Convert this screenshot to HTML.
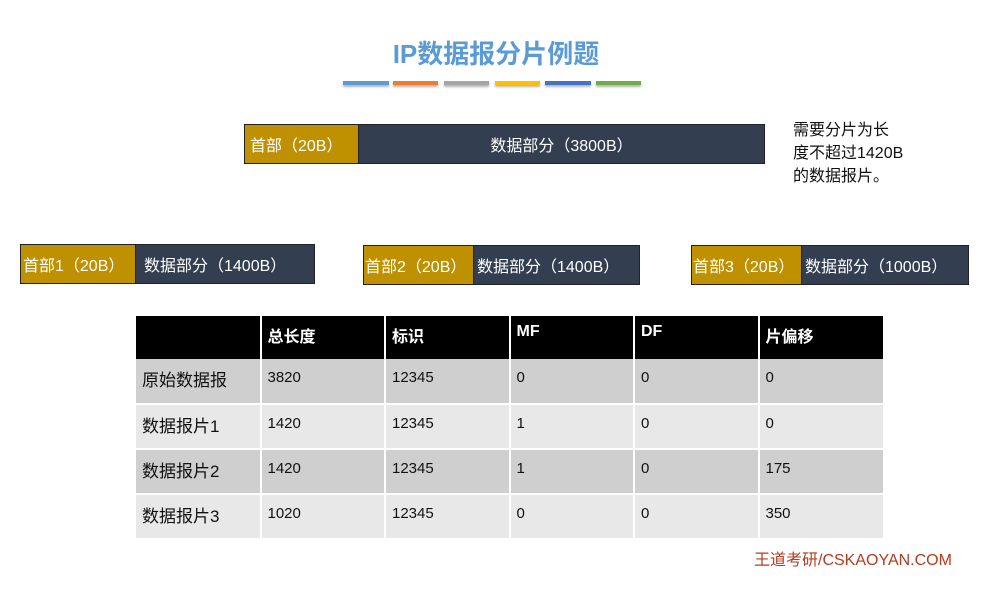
<!DOCTYPE html>
<html><head><meta charset="utf-8"><style>
*{margin:0;padding:0;box-sizing:border-box}
body{width:1002px;height:601px;background:#fff;position:relative;overflow:hidden;font-family:"Liberation Sans","Noto Sans CJK SC",sans-serif;}
.a{position:absolute}
.title{left:0;width:992px;top:34px;text-align:center;font-size:26px;font-weight:bold;color:#5b9bd5}
.bar{top:81px;height:4px;box-shadow:0 2px 2px rgba(0,0,0,.3)}
.box{position:absolute;display:flex;border:1px solid #222;color:#fff;font-size:16px;white-space:nowrap}
.box .h{background:#bf9000;display:flex;align-items:center;border-right:1px solid #222}
.box .d{background:#333f50;display:flex;align-items:center;flex:1}
table{position:absolute;left:136px;top:316px;border-collapse:collapse;width:747px;font-size:15px;color:#111}
td{height:45px;width:124.5px;border-left:2px solid #fff;border-bottom:2px solid #fff;vertical-align:top;padding:10px 0 0 6px}
td:first-child{font-size:17px;padding-top:7px}
tr.hd td{background:#000;color:#fff;font-weight:bold;height:43px;border-bottom:none;padding-top:7px;font-size:16px}
tr.hd td:first-child,td:first-child{border-left:none}
tr.o td{background:#cfcfcf}
tr.e td{background:#e8e8e8}
</style></head><body>
<div class="a title">IP数据报分片例题</div>
<div class="a bar" style="left:343px;width:46px;background:#5b9bd5"></div>
<div class="a bar" style="left:393px;width:45px;background:#ed7d31"></div>
<div class="a bar" style="left:444px;width:45px;background:#a5a5a5"></div>
<div class="a bar" style="left:495px;width:45px;background:#ffc000"></div>
<div class="a bar" style="left:545px;width:46px;background:#4472c4"></div>
<div class="a bar" style="left:596px;width:45px;background:#70ad47"></div>

<div class="box" style="left:244px;top:124px;width:521px;height:40px">
<div class="h" style="width:114px;padding-left:5px">首部（20B）</div>
<div class="d" style="justify-content:center">数据部分（3800B）</div></div>

<div class="a" style="left:793px;top:119px;font-size:16px;line-height:23px;color:#111">需要分片为长<br>度不超过1420B<br>的数据报片。</div>

<div class="box" style="left:20px;top:244px;width:295px;height:40px">
<div class="h" style="width:115px;padding-left:2px">首部1（20B）</div>
<div class="d" style="padding-left:8px">数据部分（1400B）</div></div>
<div class="box" style="left:363px;top:245px;width:277px;height:40px">
<div class="h" style="width:110px;padding-left:1px">首部2（20B）</div>
<div class="d" style="padding-left:3px">数据部分（1400B）</div></div>
<div class="box" style="left:691px;top:245px;width:278px;height:40px">
<div class="h" style="width:110px;padding-left:1px">首部3（20B）</div>
<div class="d" style="padding-left:3px">数据部分（1000B）</div></div>

<table>
<tr class="hd"><td></td><td>总长度</td><td>标识</td><td>MF</td><td>DF</td><td>片偏移</td></tr>
<tr class="o"><td>原始数据报</td><td>3820</td><td>12345</td><td>0</td><td>0</td><td>0</td></tr>
<tr class="e"><td>数据报片1</td><td>1420</td><td>12345</td><td>1</td><td>0</td><td>0</td></tr>
<tr class="o"><td>数据报片2</td><td>1420</td><td>12345</td><td>1</td><td>0</td><td>175</td></tr>
<tr class="e"><td>数据报片3</td><td>1020</td><td>12345</td><td>0</td><td>0</td><td>350</td></tr>
</table>

<div class="a" style="left:754px;top:546px;font-size:16px;color:#b83a1e">王道考研/CSKAOYAN.COM</div>
</body></html>
